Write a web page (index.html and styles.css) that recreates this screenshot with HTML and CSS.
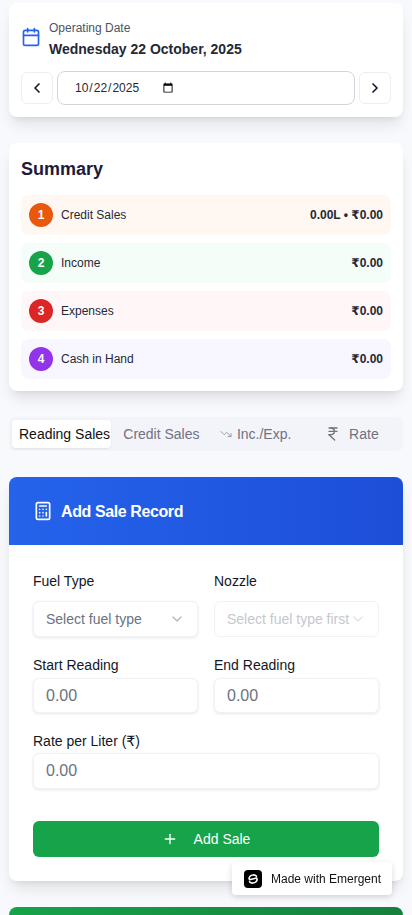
FILE: index.html
```html
<!DOCTYPE html>
<html lang="en">
  <head>
    <title>Fuel Station</title>
    <link rel="stylesheet" href="styles.css">
  </head>
  <body>
    <div class="page">
      <section class="card date-card">
        <div class="date-head">
          <svg class="cal-icon" viewBox="0 0 24 24"><path d="M8 2v4"/><path d="M16 2v4"/><rect width="18" height="18" x="3" y="4" rx="2"/><path d="M3 10h18"/></svg>
          <div class="date-text">
            <div class="date-label">Operating Date</div>
            <div class="date-value">Wednesday 22 October, 2025</div>
          </div>
        </div>
        <div class="date-row">
          <button class="nav-btn"><svg viewBox="0 0 24 24"><path d="m15 18-6-6 6-6"/></svg></button>
          <div class="date-box"><input class="date-input" type="date" value="2025-10-22"></div>
          <button class="nav-btn"><svg viewBox="0 0 24 24"><path d="m9 18 6-6-6-6"/></svg></button>
        </div>
      </section>

      <section class="card summary-card">
        <h2>Summary</h2>
        <div class="sum-list">
          <div class="sum-row orange"><span class="num">1</span><span class="sum-name">Credit Sales</span><span class="sum-val">0.00L • ₹0.00</span></div>
          <div class="sum-row green"><span class="num">2</span><span class="sum-name">Income</span><span class="sum-val">₹0.00</span></div>
          <div class="sum-row red"><span class="num">3</span><span class="sum-name">Expenses</span><span class="sum-val">₹0.00</span></div>
          <div class="sum-row purple"><span class="num">4</span><span class="sum-name">Cash in Hand</span><span class="sum-val">₹0.00</span></div>
        </div>
      </section>

      <div class="tabs">
        <div class="tab active">Reading Sales</div>
        <div class="tab credit">Credit Sales</div>
        <div class="tab exp"><svg class="trend" viewBox="0 0 24 24"><polyline points="22 17 13.5 8.5 8.5 13.5 2 7"/><polyline points="16 17 22 17 22 11"/></svg>Inc./Exp.</div>
        <div class="tab"><svg class="rupee" viewBox="0 0 24 24"><path d="M6 3h12"/><path d="M6 8h12"/><path d="m6 13 8.5 8"/><path d="M6 13h3"/><path d="M9 13c6.667 0 6.667-10 0-10"/></svg>Rate</div>
      </div>

      <section class="card sale-card">
        <div class="sale-head">
          <svg viewBox="0 0 24 24"><rect width="16" height="20" x="4" y="2" rx="2"/><line x1="8" x2="16" y1="6" y2="6"/><line x1="16" x2="16" y1="14" y2="18"/><path d="M16 10h.01"/><path d="M12 10h.01"/><path d="M8 10h.01"/><path d="M12 14h.01"/><path d="M8 14h.01"/><path d="M12 18h.01"/><path d="M8 18h.01"/></svg>
          <h3>Add Sale Record</h3>
        </div>
        <div class="sale-body">
          <div class="form-grid">
            <div class="field fuel-field">
              <label>Fuel Type</label>
              <div class="select">Select fuel type<svg viewBox="0 0 24 24"><path d="m6 9 6 6 6-6"/></svg></div>
            </div>
            <div class="field fuel-field">
              <label>Nozzle</label>
              <div class="select disabled">Select fuel type first<svg viewBox="0 0 24 24"><path d="m6 9 6 6 6-6"/></svg></div>
            </div>
            <div class="field">
              <label>Start Reading</label>
              <input class="text-input" placeholder="0.00">
            </div>
            <div class="field">
              <label>End Reading</label>
              <input class="text-input" placeholder="0.00">
            </div>
            <div class="field wide">
              <label>Rate per Liter (₹)</label>
              <input class="text-input" placeholder="0.00">
            </div>
          </div>
          <button class="add-btn"><svg viewBox="0 0 24 24"><path d="M5 12h14"/><path d="M12 5v14"/></svg>Add Sale</button>
        </div>
      </section>

      <div class="next-head"></div>
    </div>

    <div class="badge">
      <svg class="badge-logo" viewBox="0 0 18 18"><rect width="18" height="18" rx="4"/><path d="M12.500 6.200C11 4.400 7.500 4.600 6 6.200 4.800 7.500 5 9 5.500 9.800L12.600 8C13.200 9 13.200 10.600 12 11.800 10.500 13.400 7 13.600 5.500 11.800"/></svg>
      Made with Emergent
    </div>
  </body>
</html>
```

FILE: styles.css
```css
html, body {
  margin: 0;
  height: 915px;
  overflow: hidden;
}
body {
  font-family: "Liberation Sans", "DejaVu Sans", sans-serif;
  background-color: #f8f9fc;
  color: #0f172a;
}
svg {
  fill: none;
  stroke: currentColor;
  stroke-width: 2;
  stroke-linecap: round;
  stroke-linejoin: round;
}
.page {
  padding: 3px 9px 0;
}
.card {
  background-color: white;
  border-radius: 8px;
  box-shadow: 0 10px 15px -3px rgba(0, 0, 0, 0.1), 0 4px 6px -4px rgba(0, 0, 0, 0.1);
}

/* date */
.date-card {
  height: 114px;
  box-sizing: border-box;
  padding: 16px 12px 12px;
}
.date-head {
  display: flex;
  align-items: center;
  gap: 8px;
  height: 36px;
}
.cal-icon {
  width: 20px;
  height: 20px;
  color: #2563eb;
}
.date-text {
  margin-top: 4px;
}
.date-label {
  font-size: 12px;
  line-height: 17px;
  color: #4b5563;
}
.date-value {
  font-size: 14px;
  line-height: 20px;
  margin-top: 2px;
  font-weight: bold;
  color: #1f2937;
}
.date-row {
  display: flex;
  align-items: center;
  gap: 4px;
  margin-top: 16px;
}
.nav-btn {
  width: 32px;
  height: 32px;
  padding: 0;
  flex: none;
  display: flex;
  align-items: center;
  justify-content: center;
  background-color: white;
  border: 1px solid #eceef1;
  border-radius: 6px;
  color: #111827;
}
.nav-btn svg {
  width: 16px;
  height: 16px;
  stroke-width: 2.5;
}
.date-box {
  flex: 1;
  height: 34px;
  box-sizing: border-box;
  padding-left: 16px;
  display: flex;
  align-items: center;
  border: 1px solid #d1d5db;
  border-radius: 8px;
}
.date-input {
  width: 102px;
  padding: 0;
  border: 0;
  font-family: inherit;
  font-size: 12px;
  color: #1f2937;
  background-color: white;
}

/* summary */
.summary-card {
  margin-top: 26px;
  height: 248px;
  box-sizing: border-box;
  padding: 16px 12px;
}
.summary-card h2 {
  margin: 0;
  font-size: 18px;
  line-height: 20px;
  color: #1e1b3a;
}
.sum-list {
  display: flex;
  flex-direction: column;
  gap: 8px;
  margin-top: 16px;
}
.sum-row {
  height: 40px;
  display: flex;
  align-items: center;
  padding: 0 8px;
  border-radius: 8px;
  font-size: 12px;
}
.num {
  width: 24px;
  height: 24px;
  border-radius: 50%;
  display: flex;
  align-items: center;
  justify-content: center;
  color: white;
  font-weight: bold;
  margin-right: 8px;
}
.sum-name {
  flex: 1;
  color: #1f2937;
}
.sum-val {
  font-weight: bold;
  color: #1f2937;
}
.orange { background-color: #fff8f2; }
.orange .num { background-color: #ea580c; }
.green { background-color: #f5fdf9; }
.green .num { background-color: #16a34a; }
.red { background-color: #fff6f7; }
.red .num { background-color: #dc2626; }
.purple { background-color: #f8f7ff; }
.purple .num { background-color: #9333ea; }

/* tabs */
.tabs {
  margin-top: 26px;
  height: 34px;
  box-sizing: border-box;
  padding: 3px;
  display: flex;
  background-color: #f3f4fa;
  border-radius: 6px;
}
.tab {
  display: flex;
  align-items: center;
  justify-content: center;
  gap: 8px;
  width: 97px;
  font-size: 14px;
  color: #71717f;
  border-radius: 4px;
  white-space: nowrap;
}
.tab.active {
  width: 100px;
  box-sizing: border-box;
  padding-left: 7px;
  justify-content: flex-start;
  color: #111;
  background-color: white;
  box-shadow: 0 1px 2px rgba(0, 0, 0, 0.08);
}
.tab.credit {
  padding-left: 4px;
  box-sizing: border-box;
}
.tab.exp {
  gap: 5px;
}
.trend {
  width: 12px;
  height: 12px;
  color: #9a9aa8;
}
.rupee {
  width: 16px;
  height: 16px;
}

/* sale form */
.sale-card {
  margin-top: 26px;
  height: 404px;
  overflow: hidden;
}
.sale-head {
  height: 68px;
  box-sizing: border-box;
  padding-left: 24px;
  display: flex;
  align-items: center;
  gap: 8px;
  color: white;
  background: linear-gradient(to right, #2563eb, #1d4ed8);
}
.sale-head svg {
  width: 20px;
  height: 20px;
}
.sale-head h3 {
  margin: 2px 0 0;
  font-size: 16px;
  letter-spacing: -0.4px;
}
.sale-body {
  padding: 24px;
}
.form-grid {
  display: grid;
  grid-template-columns: 1fr 1fr;
  gap: 16px;
}
.wide {
  grid-column: span 2;
}
.field label {
  display: block;
  font-size: 14px;
  line-height: 24px;
  color: #111827;
  margin-bottom: 1px;
}
.fuel-field label {
  margin-bottom: 8px;
}
.wide label {
  margin-bottom: 0;
}
.select, .text-input {
  width: 100%;
  height: 35px;
  box-sizing: border-box;
  background-color: white;
  border: 1px solid #f1f2f5;
  border-radius: 6px;
  box-shadow: 0 1px 3px rgba(0, 0, 0, 0.1);
  font-family: inherit;
}
.select {
  height: 36px;
  display: flex;
  align-items: center;
  justify-content: space-between;
  padding: 0 12px;
  font-size: 14px;
  color: #6b7280;
  white-space: nowrap;
}
.select svg {
  width: 16px;
  height: 16px;
  flex: none;
  opacity: 0.5;
}
.select.disabled {
  color: #c4c8ce;
  box-shadow: none;
}
.text-input {
  padding: 0 12px;
  font-size: 16px;
}
.wide .text-input {
  height: 36px;
}
.text-input::placeholder {
  color: #6b7280;
}
.add-btn {
  width: 100%;
  height: 36px;
  margin-top: 32px;
  display: flex;
  align-items: center;
  justify-content: center;
  gap: 16px;
  border: 0;
  border-radius: 6px;
  background-color: #16a34a;
  color: white;
  font-family: inherit;
  font-size: 14px;
}
.add-btn svg {
  width: 16px;
  height: 16px;
}
.next-head {
  margin-top: 26px;
  height: 60px;
  border-radius: 8px 8px 0 0;
  background: linear-gradient(to right, #16a34a, #15803d);
}

/* made with badge */
.badge {
  position: fixed;
  left: 232px;
  top: 862px;
  width: 160px;
  height: 33px;
  box-sizing: border-box;
  padding-left: 12px;
  display: flex;
  align-items: center;
  gap: 9px;
  background-color: white;
  border-radius: 4px;
  box-shadow: 0 2px 6px rgba(0, 0, 0, 0.15);
  font-size: 12px;
  color: #111;
}
.badge-logo {
  width: 18px;
  height: 18px;
  stroke: none;
}
.badge-logo rect {
  fill: black;
}
.badge-logo path {
  stroke: white;
  stroke-width: 1.6;
}
```
